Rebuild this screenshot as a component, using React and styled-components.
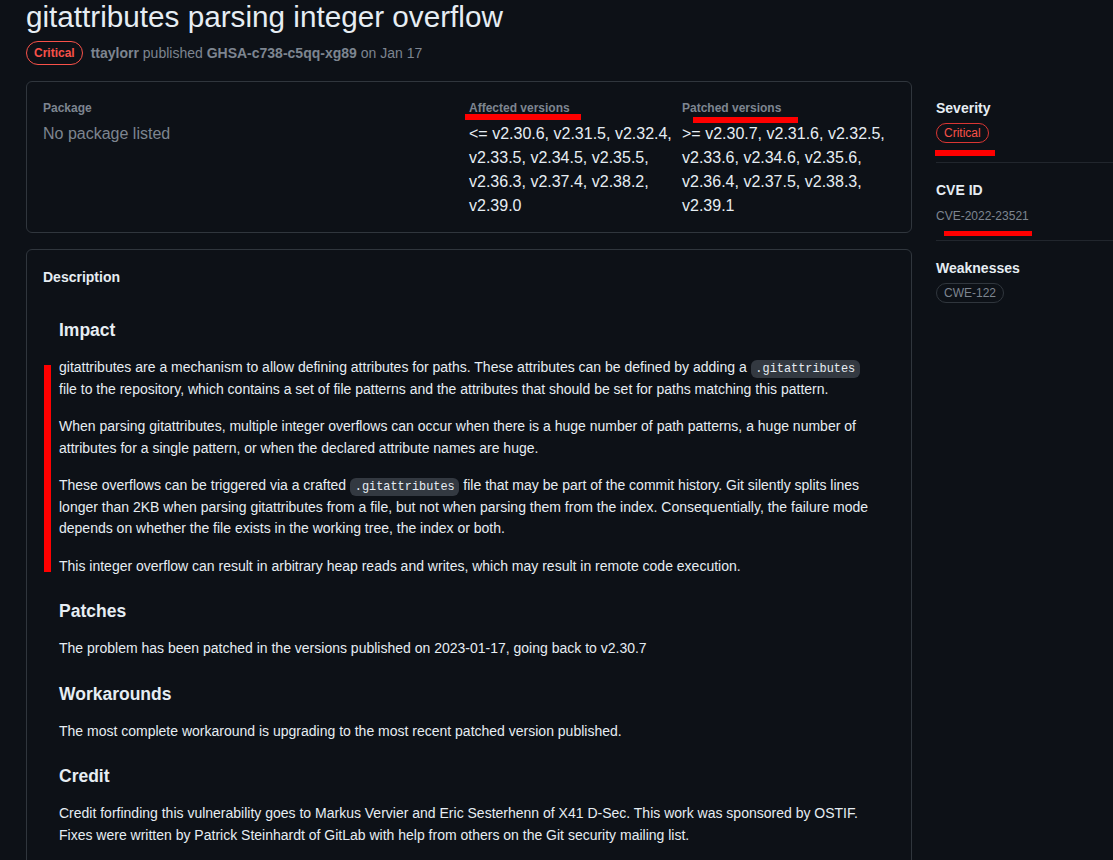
import styled, { createGlobalStyle } from "styled-components";

const GlobalStyle = createGlobalStyle`
  body {
    margin: 0;
    background: #0d1117;
    color: #e6edf3;
    font-family: "Liberation Sans", Arial, sans-serif;
    overflow: hidden;
  }
`;

const Page = styled.div`
  padding-left: 26px;
`;

const Title = styled.h1`
  margin: 0;
  font-size: 29.7px;
  font-weight: 400;
  line-height: 34px;
  color: #e6edf3;
`;

const Meta = styled.div`
  display: flex;
  align-items: center;
  gap: 8px;
  margin-top: 7px;
  font-size: 14px;
  color: #7d8590;
`;

const Strong = styled.b`
  font-weight: 700;
`;

const Badge = styled.span`
  display: inline-block;
  border: 1px solid ${({ $border }) => $border};
  border-radius: 2em;
  color: ${({ $color }) => $color};
  font-size: 12px;
  font-weight: ${({ $bold }) => ($bold ? 700 : 400)};
  line-height: ${({ $bold }) => ($bold ? "22px" : "18px")};
  padding: 0 7px;
`;

const Layout = styled.div`
  display: grid;
  grid-template-columns: 886px 1fr;
  column-gap: 24px;
  margin-top: 16px;
`;

const Main = styled.div`
  display: flex;
  flex-direction: column;
  gap: 16px;
`;

const Box = styled.div`
  position: relative;
  border: 1px solid #30363d;
  border-radius: 6px;
  padding: ${({ $pad }) => $pad || "16px"};
`;

const InfoGrid = styled.div`
  display: grid;
  grid-template-columns: 2fr 1fr 1fr;
`;

const Label = styled.div`
  position: relative;
  font-size: 12px;
  font-weight: 700;
  line-height: 18px;
  color: #7d8590;
  margin-bottom: 5px;
`;

const Versions = styled.div`
  font-size: 16px;
  line-height: 24px;
  color: ${({ $muted }) => ($muted ? "#7d8590" : "#e6edf3")};
`;

const BoxTitle = styled.h2`
  margin: 0;
  font-size: 14px;
  font-weight: 700;
  line-height: 21px;
`;

const Markdown = styled.div`
  padding: 32px 16px 0;
  font-size: 14px;

  h3 {
    margin: 24px 0 16px;
    font-size: 17.5px;
    font-weight: 700;
    line-height: 21px;
  }
  h3:first-child {
    margin-top: 0;
  }
  p {
    margin: 0 0 16px;
    line-height: 21.5px;
  }
`;

const Code = styled.code`
  font-family: "Liberation Mono", monospace;
  font-size: 85%;
  line-height: 1;
  background: rgba(110, 118, 129, 0.4);
  border-radius: 6px;
  padding: 0.2em 0.4em;
`;

const Sidebar = styled.aside`
  display: flex;
  flex-direction: column;
`;

const Section = styled.div`
  position: relative;
  padding: 17px 0 ${({ $pb }) => $pb || 16}px;
  border-bottom: ${({ $last }) => ($last ? "none" : "1px solid #21262d")};
`;

const SideLabel = styled.div`
  font-size: 14px;
  font-weight: 700;
  line-height: 21px;
  margin-bottom: 4px;
`;

const SideValue = styled.div`
  margin-top: 6px;
  font-size: 12px;
  line-height: 18px;
  color: #7d8590;
`;

const Mark = styled.span`
  position: absolute;
  left: ${({ $l }) => $l}px;
  top: ${({ $t }) => $t}px;
  width: ${({ $w }) => $w}px;
  height: ${({ $h }) => $h}px;
  background: #ff0000;
`;

export default function App() {
  return (
    <Page>
      <GlobalStyle />
      <Title>gitattributes parsing integer overflow</Title>
      <Meta>
        <Badge $border="#f85149" $color="#f85149" $bold>Critical</Badge>
        <span>
          <Strong>ttaylorr</Strong> published <Strong>GHSA-c738-c5qq-xg89</Strong> on Jan 17
        </span>
      </Meta>
      <Layout>
        <Main>
          <Box $pad="17px 16px 14px">
            <InfoGrid>
              <div>
                <Label>Package</Label>
                <Versions $muted>No package listed</Versions>
              </div>
              <div>
                <Label>
                  Affected versions
                  <Mark $l={-4} $t={15} $w={116} $h={6} />
                </Label>
                <Versions>
                  &lt;= v2.30.6, v2.31.5, v2.32.4, v2.33.5, v2.34.5, v2.35.5, v2.36.3, v2.37.4, v2.38.2, v2.39.0
                </Versions>
              </div>
              <div>
                <Label>
                  Patched versions
                  <Mark $l={11} $t={18} $w={105} $h={6} />
                </Label>
                <Versions>
                  &gt;= v2.30.7, v2.31.6, v2.32.5, v2.33.6, v2.34.6, v2.35.6, v2.36.4, v2.37.5, v2.38.3, v2.39.1
                </Versions>
              </div>
            </InfoGrid>
          </Box>
          <Box $pad="17px 16px 16px">
            <BoxTitle>Description</BoxTitle>
            <Mark $l={17} $t={115} $w={7} $h={207} />
            <Markdown>
              <h3>Impact</h3>
              <p>
                gitattributes are a mechanism to allow defining attributes for paths. These attributes can be defined by adding a <Code>.gitattributes</Code> file to the repository, which contains a set of file patterns and the attributes that should be set for paths matching this pattern.
              </p>
              <p>
                When parsing gitattributes, multiple integer overflows can occur when there is a huge number of path patterns, a huge number of attributes for a single pattern, or when the declared attribute names are huge.
              </p>
              <p>
                These overflows can be triggered via a crafted <Code>.gitattributes</Code> file that may be part of the commit history. Git silently splits lines longer than 2KB when parsing gitattributes from a file, but not when parsing them from the index. Consequentially, the failure mode depends on whether the file exists in the working tree, the index or both.
              </p>
              <p>
                This integer overflow can result in arbitrary heap reads and writes, which may result in remote code execution.
              </p>
              <h3>Patches</h3>
              <p>The problem has been patched in the versions published on 2023-01-17, going back to v2.30.7</p>
              <h3>Workarounds</h3>
              <p>The most complete workaround is upgrading to the most recent patched version published.</p>
              <h3>Credit</h3>
              <p>
                Credit forfinding this vulnerability goes to Markus Vervier and Eric Sesterhenn of X41 D-Sec. This work was sponsored by OSTIF. Fixes were written by Patrick Steinhardt of GitLab with help from others on the Git security mailing list.
              </p>
            </Markdown>
          </Box>
        </Main>
        <Sidebar>
          <Section $pb={19}>
            <SideLabel>Severity</SideLabel>
            <Badge $border="#da3633" $color="#f85149">Critical</Badge>
            <Mark $l={-1} $t={69} $w={60} $h={6} />
          </Section>
          <Section $pb={15}>
            <SideLabel>CVE ID</SideLabel>
            <SideValue>CVE-2022-23521</SideValue>
            <Mark $l={8} $t={68} $w={88} $h={5} />
          </Section>
          <Section $last>
            <SideLabel>Weaknesses</SideLabel>
            <Badge $border="#30363d" $color="#7d8590">CWE-122</Badge>
          </Section>
        </Sidebar>
      </Layout>
    </Page>
  );
}
